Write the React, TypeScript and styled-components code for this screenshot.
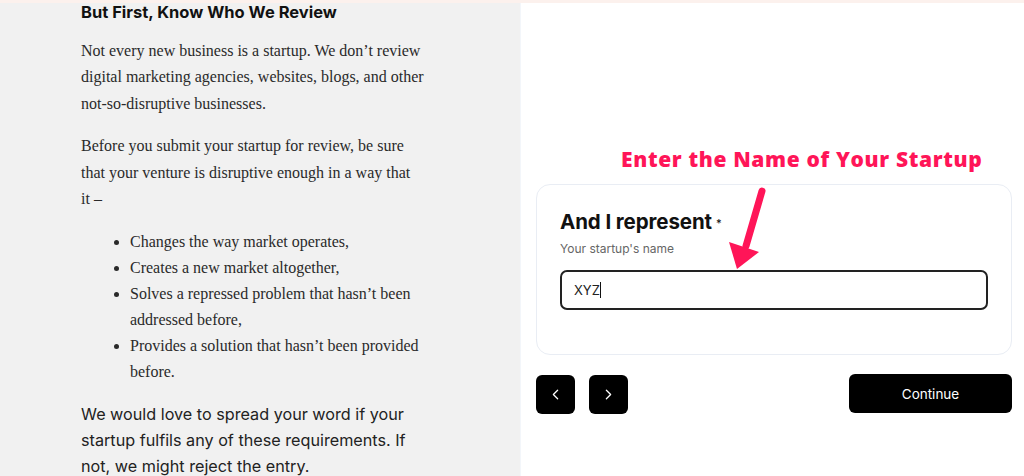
import React from "react";
import styled, { createGlobalStyle } from "styled-components";
import { ChevronLeft, ChevronRight } from "lucide-react";

const GlobalStyle = createGlobalStyle`
  html, body {
    margin: 0;
    padding: 0;
    background: #ffffff;
  }
  * {
    box-sizing: border-box;
  }
`;

const Page = styled.div`
  width: 1024px;
  height: 476px;
  overflow: hidden;
  display: flex;
  flex-direction: column;
`;

const TopStrip = styled.div`
  height: 3px;
  flex-shrink: 0;
  background: #fcf1ed;
`;

const Columns = styled.div`
  flex: 1;
  display: flex;
`;

const Article = styled.section`
  width: 520px;
  flex-shrink: 0;
  background: #f1f1f1;
  padding: 0 0 0 81px;
  color: #222222;
`;

const Heading = styled.h3`
  margin: 0;
  font-family: Inter, "Liberation Sans", sans-serif;
  font-weight: 700;
  font-size: 16.5px;
  line-height: 18px;
  color: #111111;
`;

const SerifText = styled.p<{ $gap?: number }>`
  margin: ${(p) => p.$gap ?? 16}px 0 0;
  width: 348px;
  font-family: "Liberation Serif", serif;
  font-size: 16px;
  line-height: 26.4px;
  color: #2a2a2a;
`;

const List = styled.ul`
  margin: 17px 0 0;
  padding-left: 49px;
  width: 348px;
  font-family: "Liberation Serif", serif;
  font-size: 16px;
  line-height: 26px;
  color: #2a2a2a;
`;

const SansText = styled.p`
  margin: 16px 0 0;
  width: 340px;
  font-family: Inter, "Liberation Sans", sans-serif;
  font-size: 16.2px;
  line-height: 26px;
  color: #222222;
`;

const FormPanel = styled.section`
  position: relative;
  flex: 1;
  background: #ffffff;
  border-left: 1px solid #f3f6fa;
  padding: 144px 12px 0 15px;
`;

const Callout = styled.div`
  padding-left: 85px;
  font-family: "Open Sans", "Liberation Sans", sans-serif;
  font-weight: 800;
  font-size: 21px;
  line-height: 24px;
  letter-spacing: 0.65px;
  color: #ff1558;
`;

const Card = styled.div`
  margin-top: 13px;
  border: 1px solid #e9edf4;
  border-radius: 14px;
  padding: 25px 23px 44px;
`;

const Question = styled.h2`
  margin: 0;
  font-family: Inter, "Liberation Sans", sans-serif;
  font-weight: 700;
  font-size: 20.5px;
  line-height: 24px;
  color: #111111;
  letter-spacing: -0.1px;

  sup {
    font-size: 11px;
    font-weight: 500;
    margin-left: 4px;
    vertical-align: 2px;
  }
`;

const Hint = styled.div`
  margin-top: 6px;
  font-family: Inter, "Liberation Sans", sans-serif;
  font-size: 12px;
  line-height: 16px;
  color: #666666;
`;

const Field = styled.div`
  margin-top: 13px;
  height: 40px;
  border: 2px solid #222222;
  border-radius: 7px;
  display: flex;
  align-items: center;
  padding-left: 12px;
  font-family: Inter, "Liberation Sans", sans-serif;
  font-size: 13px;
  color: #222222;
`;

const Caret = styled.span`
  display: inline-block;
  width: 1px;
  height: 16px;
  background: #111111;
`;

const Actions = styled.div`
  margin-top: 20px;
  display: flex;
  align-items: center;
  gap: 14px;
`;

const NavButton = styled.button`
  width: 39px;
  height: 39px;
  border: none;
  border-radius: 6px;
  background: #000000;
  color: #ffffff;
  display: flex;
  align-items: center;
  justify-content: center;
  padding: 0;
`;

const ContinueButton = styled.button`
  margin-left: auto;
  margin-top: -2px;
  width: 163px;
  height: 39px;
  border: none;
  border-radius: 6px;
  background: #000000;
  color: #ffffff;
  font-family: Inter, "Liberation Sans", sans-serif;
  font-size: 13.5px;
  font-weight: 400;
`;

const Pointer = styled.svg`
  position: absolute;
  left: 0;
  top: 0;
  pointer-events: none;
`;

const secondParagraph =
  "Before you submit your startup for review, be sure that your venture is disruptive enough in a way that it\u00a0–";

function App() {
  return (
    <Page>
      <GlobalStyle />
      <TopStrip />
      <Columns>
        <Article>
          <Heading>But First, Know Who We Review</Heading>
          <SerifText $gap={17}>
            Not every new business is a startup. We don’t review digital
            marketing agencies, websites, blogs, and other not-so-disruptive
            businesses.
          </SerifText>
          <SerifText>{secondParagraph}</SerifText>
          <List>
            <li>Changes the way market operates,</li>
            <li>Creates a new market altogether,</li>
            <li>Solves a repressed problem that hasn’t been addressed before,</li>
            <li>Provides a solution that hasn’t been provided before.</li>
          </List>
          <SansText>
            We would love to spread your word if your startup fulfils any of
            these requirements. If not, we might reject the entry.
          </SansText>
        </Article>
        <FormPanel>
          <Callout>Enter the Name of Your Startup</Callout>
          <Card>
            <Question>
              And I represent<sup>*</sup>
            </Question>
            <Hint>Your startup's name</Hint>
            <Field>
              XYZ
              <Caret />
            </Field>
          </Card>
          <Actions>
            <NavButton aria-label="Previous">
              <ChevronLeft size={17} strokeWidth={1.8} />
            </NavButton>
            <NavButton aria-label="Next">
              <ChevronRight size={17} strokeWidth={1.8} />
            </NavButton>
            <ContinueButton>Continue</ContinueButton>
          </Actions>
          <Pointer width="503" height="473" viewBox="521 3 503 473">
            <line
              x1="762"
              y1="191"
              x2="746"
              y2="246"
              stroke="#ff1558"
              strokeWidth="7"
              strokeLinecap="round"
            />
            <polygon points="729,242 759,252 737,269" fill="#ff1558" />
          </Pointer>
        </FormPanel>
      </Columns>
    </Page>
  );
}

export default App;
